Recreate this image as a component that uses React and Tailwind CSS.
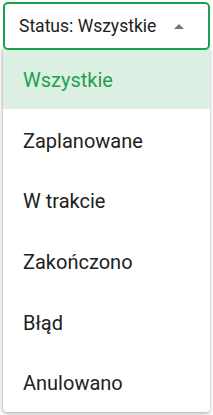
import { useState } from 'react';

const options = ['Wszystkie', 'Zaplanowane', 'W trakcie', 'Zakończono', 'Błąd', 'Anulowano'];

export default function App() {
  const [value, setValue] = useState('Wszystkie');

  return (
    <div className="w-[213px] h-[415px] bg-white pt-[2px] px-[3px] font-['Roboto',sans-serif]">
      <div className="relative">
        <button className="relative z-10 w-full h-[48px] flex items-center justify-between pl-[14px] pr-[24px] border-2 border-[#16a34a] rounded-[5px] bg-white text-[17.5px] text-[#212121]">
          <span>Status: {value}</span>
          <span className="w-0 h-0 border-l-[5px] border-r-[5px] border-b-[5px] border-l-transparent border-r-transparent border-b-[#757575]" />
        </button>
        <ul className="-mt-[2px] bg-white rounded-b-[4px] shadow-[0_2px_4px_rgba(0,0,0,0.25),-1px_0_3px_rgba(0,0,0,0.15)]">
          {options.map((o) => (
            <li
              key={o}
              onClick={() => setValue(o)}
              className={`h-[60.6px] flex items-center pt-[4px] pl-[20px] text-[20px] ${o === value ? 'bg-[#dcefe3] text-[#22a04b]' : 'text-[#212121]'}`}
            >
              {o}
            </li>
          ))}
        </ul>
      </div>
    </div>
  );
}
